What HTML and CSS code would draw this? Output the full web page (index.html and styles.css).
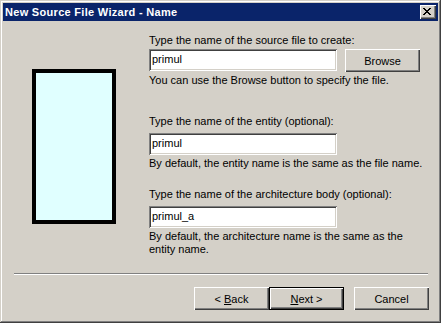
FILE: index.html
```html
<!DOCTYPE html>
<html>
<head>
	<title>New Source File Wizard - Name</title>
	<link rel="stylesheet" href="styles.css">
</head>
<body>
	<div class="window">
		<div class="titlebar">
			<span class="title">New Source File Wizard - Name</span>
			<span class="close">
				<svg width="8" height="7" viewBox="0 0 8 7" shape-rendering="crispEdges">
					<rect x="0" y="0" width="2" height="1"/><rect x="6" y="0" width="2" height="1"/>
					<rect x="1" y="1" width="2" height="1"/><rect x="5" y="1" width="2" height="1"/>
					<rect x="2" y="2" width="4" height="1"/>
					<rect x="3" y="3" width="2" height="1"/>
					<rect x="2" y="4" width="4" height="1"/>
					<rect x="1" y="5" width="2" height="1"/><rect x="5" y="5" width="2" height="1"/>
					<rect x="0" y="6" width="2" height="1"/><rect x="6" y="6" width="2" height="1"/>
				</svg>
			</span>
		</div>

		<div class="main">
			<div class="side">
				<div class="preview"></div>
			</div>

			<div class="form">
				<div class="group" id="g_file">
					<div class="label">Type the name of the source file to create:</div>
					<div class="row">
						<div class="edit">primul</div>
						<div class="btn browse">Browse</div>
					</div>
					<div class="hint">You can use the Browse button to specify the file.</div>
				</div>

				<div class="group" id="g_entity">
					<div class="label">Type the name of the entity (optional):</div>
					<div class="row">
						<div class="edit">primul</div>
					</div>
					<div class="hint">By default, the entity name is the same as the file name.</div>
				</div>

				<div class="group" id="g_arch">
					<div class="label">Type the name of the architecture body (optional):</div>
					<div class="row">
						<div class="edit">primul_a</div>
					</div>
					<div class="hint">By default, the architecture name is the same as the<br>entity name.</div>
				</div>
			</div>
		</div>

		<div class="separator"></div>

		<div class="actions">
			<div class="btn">&lt;&nbsp;<u>B</u>ack</div>
			<div class="btn default"><u>N</u>ext &gt;</div>
			<div class="btn cancel">Cancel</div>
		</div>
	</div>
</body>
</html>
```

FILE: styles.css
```css
body {
	margin: 0;
	background-color: #d4d0c8;
	font-family: "Liberation Sans", Arial, sans-serif;
	font-size: 11px;
	color: #000;
}

.window {
	width: 441px;
	height: 323px;
	box-sizing: border-box;
	padding: 3px;
	display: flex;
	flex-direction: column;
	background-color: #d4d0c8;
	box-shadow: inset -1px -1px #404040, inset 1px 1px #d4d0c8,
		inset -2px -2px #808080, inset 2px 2px #fff;
}

/* title bar */

.titlebar {
	height: 18px;
	display: flex;
	align-items: center;
	justify-content: space-between;
	background-color: #0a246a;
	padding: 0 2px 0 2px;
}

.title {
	color: #fff;
	font-weight: bold;
	letter-spacing: 0.3px;
	line-height: 18px;
}

.close {
	width: 16px;
	height: 14px;
	box-sizing: border-box;
	padding: 3px 0 0 3px;
	background-color: #d4d0c8;
	box-shadow: inset 1px 1px #fff, inset -1px -1px #404040, inset -2px -2px #808080;
}

.close svg {
	display: block;
}

/* body */

.main {
	flex: 1;
	display: flex;
}

.side {
	width: 146px;
}

.preview {
	width: 84px;
	height: 155px;
	box-sizing: border-box;
	margin: 48px 0 0 29px;
	border: 4px solid #000;
	background-color: #e0ffff;
}

.form {
	padding-top: 13px;
}

.label, .hint {
	line-height: 13px;
}

.row {
	display: flex;
	align-items: flex-start;
	margin-top: 2px;
}

.edit {
	width: 188px;
	height: 22px;
	box-sizing: border-box;
	padding: 4px 3px;
	line-height: 13px;
	background-color: #fff;
	box-shadow: inset 1px 1px #808080, inset -1px -1px #fff,
		inset 2px 2px #404040, inset -2px -2px #d4d0c8;
}

.hint {
	margin-top: 2px;
}

#g_entity {
	margin-top: 28px;
}

#g_entity .row, #g_arch .row {
	margin-top: 5px;
}

#g_arch {
	margin-top: 18px;
}

.btn {
	width: 75px;
	height: 23px;
	box-sizing: border-box;
	display: flex;
	align-items: center;
	justify-content: center;
	background-color: #d4d0c8;
	box-shadow: inset 1px 1px #fff, inset -1px -1px #404040, inset -2px -2px #808080;
}

.browse {
	margin-left: 8px;
}

.btn.default {
	box-shadow: inset 0 0 0 1px #000, inset 2px 2px #fff,
		inset -2px -2px #404040, inset -3px -3px #808080;
}

/* bottom */

.separator {
	margin: 0 10px 0 11px;
	border-top: 1px solid #808080;
	border-bottom: 1px solid #fff;
}

.actions {
	display: flex;
	justify-content: flex-end;
	margin: 12px 9px 10px 0;
}

.cancel {
	margin-left: 10px;
}
```
